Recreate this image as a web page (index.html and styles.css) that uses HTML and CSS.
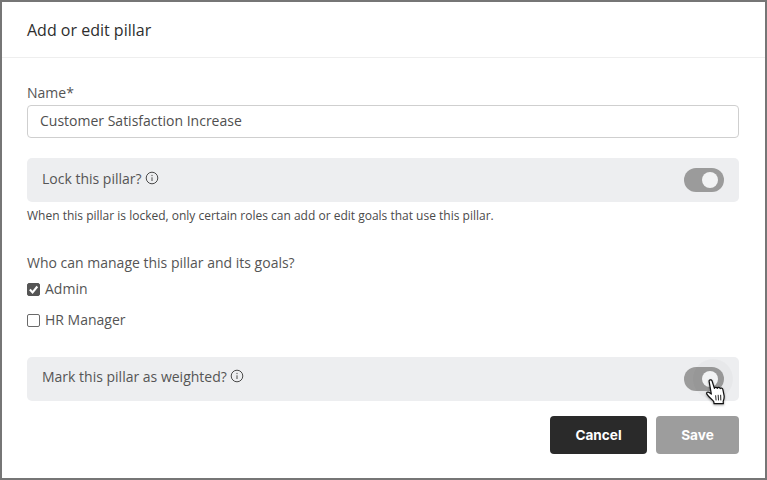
FILE: index.html
```html
<!DOCTYPE html>
<html lang="en">
<head>
<meta charset="utf-8">
<title>Add or edit pillar</title>
<link rel="stylesheet" href="styles.css">
</head>
<body>
<div class="modal">
  <header class="modal-header">Add or edit pillar</header>
  <main class="modal-body">
    <label class="field-label" for="name">Name*</label>
    <input class="text-input" id="name" type="text" value="Customer Satisfaction Increase">
    <div class="toggle-row lock-row">
      <span class="toggle-text">Lock this pillar?
        <svg class="info" viewBox="0 0 14 14"><circle cx="7" cy="7" r="5.8"/><path d="M7 6.300v3.700M7 3.900v1.200"/></svg>
      </span>
      <span class="switch"><span class="knob"></span></span>
    </div>
    <p class="help">When this pillar is locked, only certain roles can add or edit goals that use this pillar.</p>
    <p class="question">Who can manage this pillar and its goals?</p>
    <div class="check-row first">
      <span class="box checked"><svg viewBox="0 0 13 13"><path d="M2.200 6.500l3.200 3.400L11 3"/></svg></span>
      <span>Admin</span>
    </div>
    <div class="check-row">
      <span class="box"></span>
      <span>HR Manager</span>
    </div>
    <div class="toggle-row weight-row">
      <span class="toggle-text">Mark this pillar as weighted?
        <svg class="info" viewBox="0 0 14 14"><circle cx="7" cy="7" r="5.8"/><path d="M7 6.300v3.700M7 3.900v1.200"/></svg>
      </span>
      <span class="switch hovered">
        <span class="knob"></span>
        <svg class="cursor" viewBox="0 0 22 29">
          <path d="M3.600 2.500c-.4-1.700 2.500-2.300 3.100-.6l2.600 8.200c0-1.500 2.700-1.700 3.100-.1.300-1.300 2.700-1.300 3.100.3.500-1 2.600-.7 2.900 1l1.300 6.500c.4 2.400-.2 4.300-1 6.300l.2 2.400H8.900l-.3-2.200c-1.800-2.400-5.400-4.700-7.400-8-.9-1.600 1-3 2.500-1.900l2.300 1.800z"/>
          <path class="lines" d="M10.600 17.500l.5 5.500M13.300 17l.4 6M16 17l.2 6"/>
        </svg>
      </span>
    </div>
    <div class="actions">
      <button class="btn cancel" type="button">Cancel</button>
      <button class="btn save" type="button">Save</button>
    </div>
  </main>
</div>
</body>
</html>
```
FILE: styles.css
```css
* { box-sizing: border-box; }
html, body { margin: 0; padding: 0; }
body {
  width: 767px;
  height: 480px;
  overflow: hidden;
  background: #fff;
  font-family: "Open Sans", "Liberation Sans", sans-serif;
  color: #4f4f4f;
}
.modal {
  width: 767px;
  height: 480px;
  border: 2px solid #767676;
  background: #fff;
}
.modal-header {
  height: 56px;
  padding: 0 25px;
  display: flex;
  align-items: center;
  font-size: 16px;
  color: #2e2e2e;
  border-bottom: 1px solid #eeeeee;
}
.modal-body {
  padding: 25px 26px 0 25px;
  font-size: 14px;
}
.field-label {
  display: block;
  height: 22px;
  line-height: 20px;
  font-size: 14px;
  color: #555;
}
.text-input {
  display: block;
  width: 100%;
  height: 33px;
  padding: 0 12px 2px;
  border: 1px solid #cfcfcf;
  border-radius: 4px;
  background: #fff;
  font: 14px "Open Sans", "Liberation Sans", sans-serif;
  color: #4f4f4f;
  outline: none;
}
.toggle-row {
  height: 44px;
  padding: 0 15px;
  display: flex;
  align-items: center;
  justify-content: space-between;
  background: #edeef0;
  border-radius: 5px;
}
.lock-row { margin-top: 20px; }
.weight-row { margin-top: 28px; }
.toggle-text {
  display: flex;
  align-items: center;
  gap: 3px;
  margin-bottom: 5px;
  font-size: 14px;
  color: #555;
}
.lock-row .toggle-text { margin-bottom: 3px; }
.info {
  width: 14px;
  height: 14px;
  margin-top: -2px;
  fill: none;
  stroke: #4a4a4a;
  stroke-width: 1;
}
.switch {
  position: relative;
  width: 40px;
  height: 24px;
  border-radius: 12px;
  background: #9b9b9b;
  display: flex;
  align-items: center;
  justify-content: flex-end;
  padding-right: 6px;
}
.knob {
  width: 16px;
  height: 16px;
  border-radius: 50%;
  background: #f2f3f4;
}
.hovered::before {
  content: "";
  position: absolute;
  right: -9px;
  top: -8px;
  width: 40px;
  height: 40px;
  border-radius: 50%;
  background: rgba(0, 0, 0, 0.025);
}
.hovered .knob { position: relative; }
.cursor {
  position: absolute;
  left: 21px;
  top: 12px;
  width: 22px;
  height: 27px;
  overflow: visible;
}
.cursor path {
  fill: #fff;
  stroke: #111;
  stroke-width: 1.3;
  stroke-linejoin: round;
  filter: drop-shadow(0 1px 1px rgba(0, 0, 0, 0.35));
}
.cursor .lines {
  fill: none;
  filter: none;
  stroke-width: 1;
}
.help {
  margin: 6px 0 0;
  height: 16px;
  line-height: 16px;
  font-size: 12px;
  color: #4a4a4a;
}
.question {
  margin: 29px 0 0;
  height: 20px;
  line-height: 20px;
  font-size: 14px;
  color: #555;
}
.check-row {
  display: flex;
  align-items: center;
  gap: 5px;
  height: 20px;
  margin-top: 11px;
  font-size: 14px;
  color: #555;
}
.check-row.first { margin-top: 5px; }
.box {
  width: 13px;
  height: 13px;
  border: 1px solid #6a6a6a;
  border-radius: 2px;
  background: #fff;
  margin-top: 2px;
}
.box.checked {
  background: #555;
  border-color: #555;
  display: flex;
}
.box svg {
  width: 11px;
  height: 11px;
  fill: none;
  stroke: #fff;
  stroke-width: 2.500;
}
.actions {
  display: flex;
  justify-content: flex-end;
  gap: 9px;
  margin-top: 15px;
}
.btn {
  height: 38px;
  border: none;
  border-radius: 4px;
  font: 700 13.6px Inter, "Liberation Sans", sans-serif;
  color: #fff;
}
.cancel { width: 97px; background: #2a2a2a; }
.save { width: 83px; background: #9d9d9d; }
```
